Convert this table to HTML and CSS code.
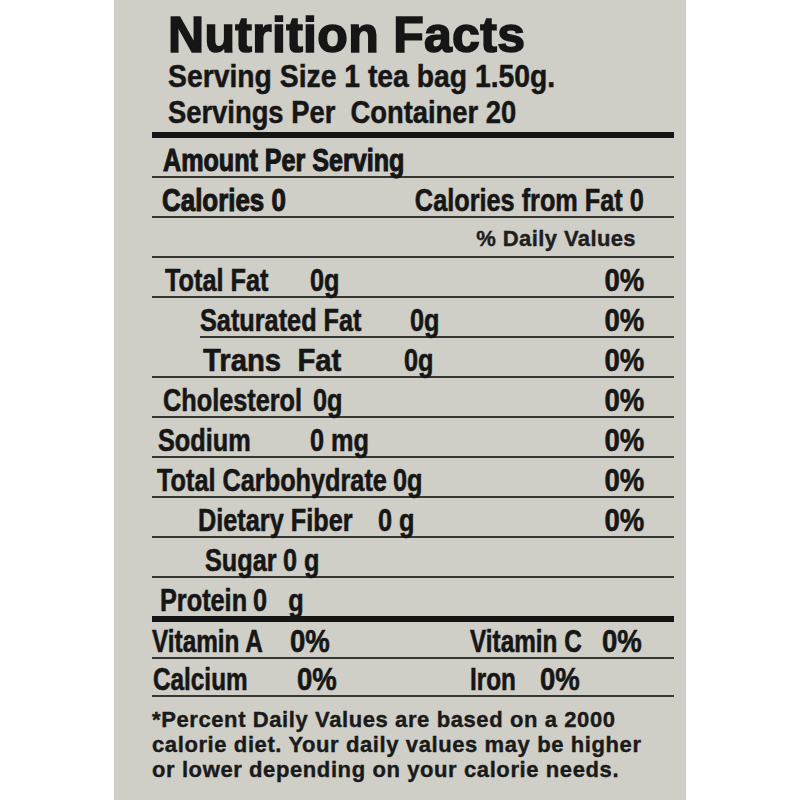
FILE: index.html
```html
<!DOCTYPE html>
<html lang="en">
<head>
<meta charset="utf-8">
<title>Nutrition Facts</title>
<link rel="stylesheet" href="styles.css">
</head>
<body>
<div class="label">
  <header class="head">
    <h1 class="title">Nutrition Facts</h1>
    <p class="serving">Serving Size 1 tea bag 1.50g.</p>
    <p class="serving serving-count">Servings Per&nbsp; Container 20</p>
  </header>

  <section class="facts">
    <div class="row row-amount"><span class="t heavy">Amount Per Serving</span></div>
    <div class="row row-cal"><span class="t heavy">Calories 0</span><span class="t end">Calories from Fat 0</span></div>
    <div class="row row-dv"><span class="end dv">% Daily Values</span></div>
    <div class="row row-main"><span class="t w-fat">Total Fat</span><span class="t">0g</span><span class="t end pct">0%</span></div>
    <div class="row row-sat"><span class="t w-sat">Saturated Fat</span><span class="t">0g</span><span class="t end pct">0%</span></div>
    <div class="row row-trans"><span class="t w-trans wide">Trans&nbsp; Fat</span><span class="t">0g</span><span class="t end pct">0%</span></div>
    <div class="row row-chol"><span class="t w-chol">Cholesterol</span><span class="t">0g</span><span class="t end pct">0%</span></div>
    <div class="row row-sod"><span class="t w-sod">Sodium</span><span class="t">0 mg</span><span class="t end pct">0%</span></div>
    <div class="row row-carb"><span class="t w-carb">Total Carbohydrate</span><span class="t">0g</span><span class="t end pct">0%</span></div>
    <div class="row row-fiber"><span class="t w-fiber">Dietary Fiber</span><span class="t">0&nbsp;g</span><span class="t end pct">0%</span></div>
    <div class="row row-sugar"><span class="t w-sugar">Sugar</span><span class="t">0&nbsp;g</span></div>
    <div class="row row-protein"><span class="t w-protein">Protein</span><span class="t">0&nbsp;&nbsp; g</span></div>
  </section>

  <section class="vitamins">
    <div class="vrow vrow-a">
      <span class="t w-va">Vitamin A</span><span class="t pct w-va2">0%</span><span class="t w-vc">Vitamin C</span><span class="t pct">0%</span>
    </div>
    <div class="vrow vrow-b">
      <span class="t w-ca">Calcium</span><span class="t pct w-ca2">0%</span><span class="t w-fe">Iron</span><span class="t pct">0%</span>
    </div>
  </section>

  <p class="note">*Percent Daily Values are based on a 2000<br>calorie diet. Your daily values may be higher<br>or lower depending on your calorie needs.</p>
</div>
</body>
</html>
```

FILE: styles.css
```css
* {
  box-sizing: border-box;
}

html, body {
  margin: 0;
  padding: 0;
  background: #ffffff;
}

body {
  height: 800px;
  overflow: hidden;
}

.label {
  margin-left: 114px;
  width: 572px;
  height: 800px;
  background: #cfcec7;
  color: #161616;
  font-family: "Liberation Sans", Arial, sans-serif;
  font-weight: 700;
  display: flex;
  flex-direction: column;
}

/* condensed text: Liberation Sans Bold squeezed like a narrow face */
.t {
  flex: none;
  display: inline-block;
  white-space: nowrap;
  transform: scaleX(0.79);
  transform-origin: 0 100%;
  -webkit-text-stroke: 0.6px #161616;
}

.end {
  margin-left: auto;
  transform-origin: 100% 100%;
}

.pct {
  transform: scaleX(0.86);
}

.wide {
  transform: scaleX(0.915);
}

.heavy {
  -webkit-text-stroke: 1.1px #161616;
  transform: scaleX(0.81);
}

.head {
  padding-left: 54px;
  padding-top: 13px;
}

.title {
  margin: 0;
  font-size: 50px;
  font-weight: 700;
  line-height: 44px;
  letter-spacing: 0.3px;
  -webkit-text-stroke: 1.6px #161616;
}

.serving {
  margin: 0;
  font-size: 32px;
  line-height: 36px;
  white-space: nowrap;
  transform: scaleX(0.885);
  transform-origin: 0 100%;
  -webkit-text-stroke: 0.5px #161616;
}

.serving:first-of-type {
  margin-top: 1px;
}

.serving-count {
  transform: scaleX(0.855);
}

.facts {
  margin: 2px 0 0 38px;
  width: 522px;
  border-top: 6px solid #141414;
  border-bottom: 6px solid #141414;
}

.row {
  height: 40px;
  display: flex;
  align-items: flex-end;
  padding-left: 9px;
  padding-right: 30px;
  border-bottom: 2px solid #363633;
  font-size: 32px;
  line-height: 1;
}

.row:last-child {
  border-bottom: none;
  height: 38px;
}

.row-amount {
  padding-left: 11px;
  font-size: 31px;
}

.row-cal {
  padding-left: 10px;
}

.row-dv {
  padding-bottom: 6px;
  padding-right: 38px;
}

.dv {
  font-size: 22px;
  letter-spacing: 0.4px;
  color: #1e1e1e;
  -webkit-text-stroke: 0.4px #1e1e1e;
}

.row-main { padding-left: 13px; }
.row-sat { margin-left: 48px; padding-left: 0; }
.row-trans { padding-left: 51px; }
.row-chol { padding-left: 11px; }
.row-sod { padding-left: 6px; }
.row-carb { padding-left: 5px; }
.row-fiber { padding-left: 46px; }
.row-sugar { padding-left: 53px; }
.row-protein { padding-left: 8px; }

.w-fat { width: 145px; }
.w-sat { width: 210px; }
.w-trans { width: 201px; }
.w-chol { width: 150px; }
.w-sod { width: 152px; }
.w-carb { width: 236px; }
.w-fiber { width: 180px; }
.w-sugar { width: 78px; }
.w-protein { width: 93px; }

.vitamins {
  margin-left: 38px;
  width: 522px;
}

.vrow {
  display: flex;
  align-items: flex-end;
  border-bottom: 2px solid #363633;
  font-size: 32px;
  line-height: 1;
}

.vrow .t:not(.pct) {
  transform: scaleX(0.76);
}

.vrow-a {
  height: 37px;
}

.vrow-b {
  height: 38px;
  padding-left: 1px;
}

.w-va { width: 138px; }
.w-va2 { width: 180px; }
.w-vc { width: 132px; }
.w-ca { width: 144px; }
.w-ca2 { width: 173px; }
.w-fe { width: 70px; }

.note {
  margin: 0 0 0 38px;
  padding-top: 10px;
  font-size: 22px;
  line-height: 25px;
  letter-spacing: 0.6px;
  color: #1a1a1a;
  -webkit-text-stroke: 0.4px #1a1a1a;
}
```
